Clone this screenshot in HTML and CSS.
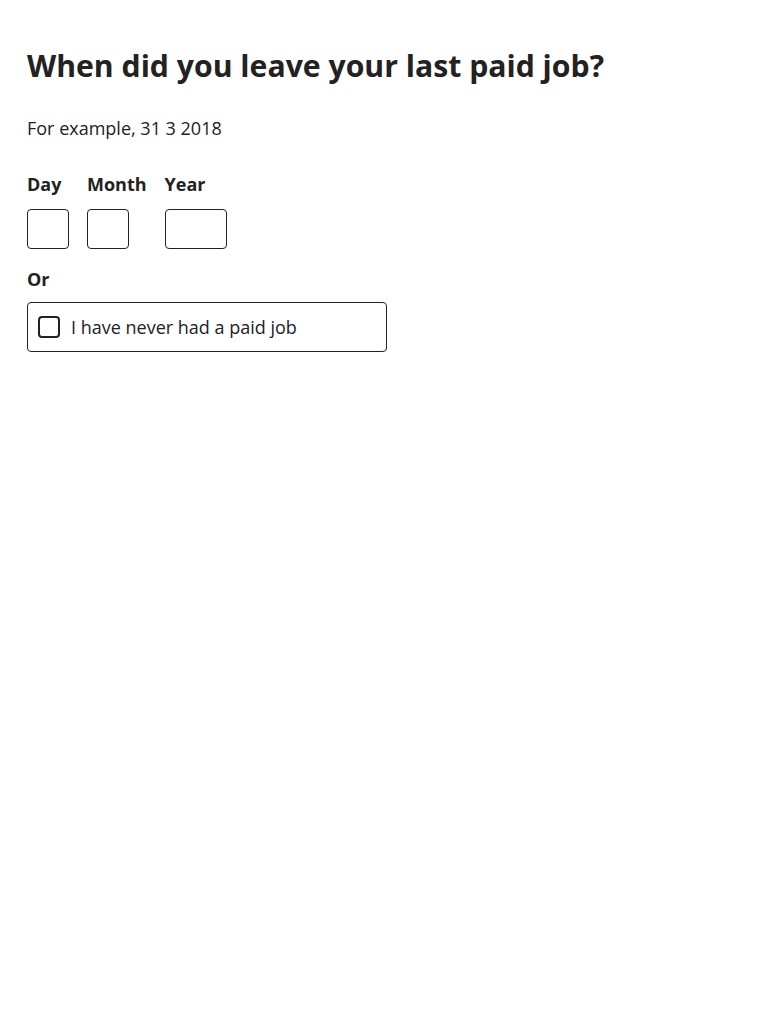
FILE: index.html
```html
<!DOCTYPE html>
<html lang="en">
<head>
<meta charset="utf-8">
<link rel="stylesheet" href="styles.css">
</head>
<body>
<main class="page">
  <h1 class="title">When did you leave your last paid job?</h1>
  <p class="hint">For example, 31 3 2018</p>
  <div class="date">
    <div class="date-item">
      <label class="label" for="d">Day</label>
      <input class="input w2" id="d" type="text">
    </div>
    <div class="date-item">
      <label class="label" for="m">Month</label>
      <input class="input w2" id="m" type="text">
    </div>
    <div class="date-item">
      <label class="label" for="y">Year</label>
      <input class="input w4" id="y" type="text">
    </div>
  </div>
  <p class="or">Or</p>
  <label class="check">
    <span class="box"></span>
    <span class="check-text">I have never had a paid job</span>
  </label>
</main>
</body>
</html>
```
FILE: styles.css
```css
* { box-sizing: border-box; }
body {
  margin: 0;
  background: #fff;
  color: #222;
  font-family: "Open Sans", "Noto Sans", sans-serif;
}
.page { padding: 44px 27px; }
.title {
  margin: 0;
  font-size: 30.2px;
  font-weight: 700;
  line-height: 44px;
}
.hint {
  margin: 26px 0 0;
  font-size: 18px;
  line-height: 28px;
}
.date {
  display: flex;
  gap: 18px;
  margin-top: 28px;
}
.date-item { display: flex; flex-direction: column; }
.label {
  font-size: 18px;
  font-weight: 700;
  line-height: 28px;
}
.input {
  margin-top: 11px;
  height: 40px;
  border: 1px solid #222;
  border-radius: 4px;
  background: #fff;
  font: inherit;
}
.w2 { width: 42px; }
.w4 { width: 62px; }
.or {
  margin: 16px 0 0;
  font-size: 18px;
  font-weight: 700;
  line-height: 28px;
}
.check {
  margin-top: 9px;
  width: 360px;
  height: 50px;
  border: 1px solid #222;
  border-radius: 4px;
  display: flex;
  align-items: center;
  padding-left: 10px;
  gap: 11px;
}
.box {
  width: 22px;
  height: 22px;
  border: 2px solid #222;
  border-radius: 4px;
}
.check-text {
  font-size: 18px;
  line-height: 28px;
}
```
